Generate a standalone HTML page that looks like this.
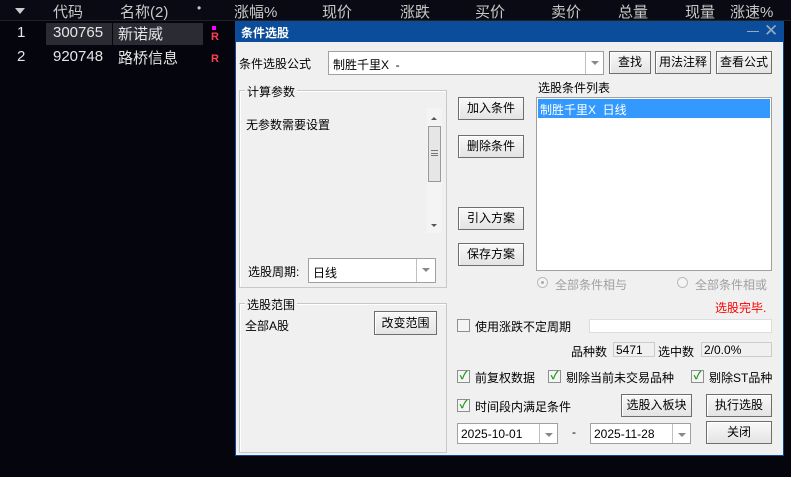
<!DOCTYPE html><html><head><meta charset="utf-8"><style>
*{margin:0;padding:0;box-sizing:border-box}
body{width:791px;height:477px;background:#05050d;font-family:"Liberation Sans","Noto Sans CJK SC",sans-serif;position:relative;overflow:hidden;color:#000}
.a{position:absolute;white-space:nowrap}
.h{color:#c8c8c8;font-size:15px;top:1px}
.w{color:#e6e6e6;font-size:15px}
.d{font-size:12px}
.btn{position:absolute;background:linear-gradient(#f8f8f8,#e4e4e4);border:1px solid #6e6e6e;box-shadow:inset 1px 1px #fff;font-size:12px;text-align:center}
.inp{position:absolute;background:#fff;border:1px solid #a0a0a0}
.grp{position:absolute;border:1px solid #c8c8c8;box-shadow:inset 1px 1px #fff}
.cb{position:absolute;width:13px;height:13px;border:1px solid #8e8f8f;background:#f4f4f4;font-size:11px;color:#1a9a1a;line-height:11px;text-align:center;font-weight:bold}
.dd{position:absolute;right:0;top:0;bottom:0;width:18px;border-left:1px solid #c0c0c0}
.dd:after{content:"";position:absolute;left:5px;top:9px;border:4px solid transparent;border-top:4px solid #888}
</style></head><body>
<div class="a" style="left:0;top:0;width:791px;height:21px;background:#0a0a14;border-bottom:1px solid #222"></div>
<div class="a" style="left:15px;top:8px;border:5px solid transparent;border-top:6px solid #ccc"></div>
<div class="a h" style="left:53px">代码</div>
<div class="a h" style="left:120px">名称(2)</div>
<div class="a h" style="left:197px;font-size:12px">•</div>
<div class="a h" style="left:234px">涨幅%</div>
<div class="a h" style="left:322px">现价</div>
<div class="a h" style="left:400px">涨跌</div>
<div class="a h" style="left:475px">买价</div>
<div class="a h" style="left:551px">卖价</div>
<div class="a h" style="left:618px">总量</div>
<div class="a h" style="left:685px">现量</div>
<div class="a h" style="left:730px">涨速%</div>
<div class="a" style="left:46px;top:23px;width:66px;height:22px;background:#2a2b33"></div>
<div class="a" style="left:113px;top:23px;width:90px;height:22px;background:#2a2b33"></div>
<div class="a w" style="left:17px;top:24px">1</div>
<div class="a w" style="left:53px;top:24px">300765</div>
<div class="a w" style="left:118px;top:23px">新诺威</div>
<div class="a" style="left:212px;top:26px;width:4px;height:4px;background:#f0f"></div>
<div class="a" style="left:211px;top:31px;color:#ff4050;font-size:11px;font-weight:bold">R</div>
<div class="a w" style="left:17px;top:48px">2</div>
<div class="a w" style="left:53px;top:48px">920748</div>
<div class="a w" style="left:118px;top:47px">路桥信息</div>
<div class="a" style="left:211px;top:53px;color:#ff4050;font-size:11px;font-weight:bold">R</div>

<div class="a" style="left:235px;top:21px;width:549px;height:435px;background:#f0f0f0;border:1px solid #0a4a94"></div>
<div class="a" style="left:235px;top:21px;width:549px;height:21px;background:#0b4d9a"></div>
<div class="a" style="left:241px;top:24px;color:#fff;font-size:12px;font-weight:bold">条件选股</div>
<div class="a" style="left:747px;top:31px;width:12px;height:1px;background:#9ab"></div>
<div class="a" style="left:764px;top:21px;color:#9ab;font-size:17px">✕</div>

<div class="a d" style="left:239px;top:55px">条件选股公式</div>
<div class="inp" style="left:328px;top:51px;width:276px;height:24px"><span class="a d" style="left:4px;top:4px">制胜千里X &nbsp;-</span><div class="dd"></div></div>
<div class="btn" style="left:609px;top:51px;width:42px;height:23px;line-height:21px">查找</div>
<div class="btn" style="left:655px;top:51px;width:56px;height:23px;line-height:21px">用法注释</div>
<div class="btn" style="left:716px;top:51px;width:56px;height:23px;line-height:21px">查看公式</div>

<div class="grp" style="left:239px;top:90px;width:208px;height:198px"></div>
<div class="a d" style="left:245px;top:83px;background:#f0f0f0;padding:0 2px">计算参数</div>
<div class="a d" style="left:246px;top:116px">无参数需要设置</div>
<div class="a" style="left:427px;top:108px;width:15px;height:125px;background:#f4f4f4"></div>
<div class="a" style="left:428px;top:126px;width:13px;height:56px;background:#e6e6e6;border:1px solid #999"></div>
<div class="a" style="left:431px;top:150px;width:7px;height:6px;border-top:1px solid #777;border-bottom:1px solid #777"></div>
<div class="a" style="left:431px;top:153px;width:7px;height:1px;background:#777"></div>
<div class="a" style="left:431px;top:114px;border:3px solid transparent;border-bottom:3px solid #555"></div>
<div class="a" style="left:431px;top:224px;border:3px solid transparent;border-top:3px solid #555"></div>
<div class="a d" style="left:248px;top:263px">选股周期:</div>
<div class="inp" style="left:308px;top:258px;width:128px;height:25px"><span class="a d" style="left:4px;top:5px">日线</span><div class="dd" style="width:19px"></div></div>

<div class="grp" style="left:239px;top:303px;width:208px;height:150px"></div>
<div class="a d" style="left:245px;top:296px;background:#f0f0f0;padding:0 2px">选股范围</div>
<div class="a d" style="left:245px;top:317px">全部A股</div>
<div class="btn" style="left:374px;top:311px;width:63px;height:24px;line-height:22px">改变范围</div>

<div class="btn" style="left:458px;top:97px;width:66px;height:23px;line-height:21px">加入条件</div>
<div class="btn" style="left:458px;top:135px;width:66px;height:23px;line-height:21px">删除条件</div>
<div class="btn" style="left:458px;top:207px;width:66px;height:23px;line-height:21px">引入方案</div>
<div class="btn" style="left:458px;top:243px;width:66px;height:23px;line-height:21px">保存方案</div>

<div class="a d" style="left:538px;top:79px">选股条件列表</div>
<div class="inp" style="left:536px;top:97px;width:236px;height:174px"></div>
<div class="a" style="left:538px;top:99px;width:232px;height:19px;background:#3399ff"></div>
<div class="a d" style="left:540px;top:101px;color:#fff">制胜千里X &nbsp;日线</div>
<div class="a" style="left:537px;top:277px;width:11px;height:11px;border-radius:50%;border:1px solid #bbb;background:#f4f4f4"></div>
<div class="a" style="left:541px;top:281px;width:3px;height:3px;border-radius:50%;background:#aaa"></div>
<div class="a d" style="left:555px;top:276px;color:#a0a0a0">全部条件相与</div>
<div class="a" style="left:677px;top:277px;width:11px;height:11px;border-radius:50%;border:1px solid #bbb;background:#f4f4f4"></div>
<div class="a d" style="left:695px;top:276px;color:#a0a0a0">全部条件相或</div>
<div class="a d" style="left:715px;top:299px;color:#f00">选股完毕.</div>

<div class="cb" style="left:457px;top:319px"></div>
<div class="a d" style="left:475px;top:318px">使用涨跌不定周期</div>
<div class="inp" style="left:589px;top:319px;width:183px;height:14px;border-color:#ddd"></div>
<div class="a d" style="left:571px;top:343px">品种数</div>
<div class="a d" style="left:613px;top:342px;width:42px;height:15px;border:1px solid #ccc;padding-left:2px">5471</div>
<div class="a d" style="left:658px;top:343px">选中数</div>
<div class="a d" style="left:701px;top:342px;width:71px;height:15px;border:1px solid #ccc;padding-left:2px">2/0.0%</div>

<div class="cb" style="left:457px;top:370px">✓</div>
<div class="a d" style="left:475px;top:369px">前复权数据</div>
<div class="cb" style="left:548px;top:370px">✓</div>
<div class="a d" style="left:566px;top:369px">剔除当前未交易品种</div>
<div class="cb" style="left:691px;top:370px">✓</div>
<div class="a d" style="left:709px;top:369px">剔除ST品种</div>
<div class="cb" style="left:457px;top:399px">✓</div>
<div class="a d" style="left:475px;top:398px">时间段内满足条件</div>
<div class="btn" style="left:621px;top:394px;width:71px;height:23px;line-height:21px">选股入板块</div>
<div class="btn" style="left:706px;top:394px;width:66px;height:23px;line-height:21px">执行选股</div>
<div class="inp" style="left:457px;top:423px;width:101px;height:21px"><span class="a d" style="left:3px;top:3px">2025-10-01</span><div class="dd" style="width:18px"></div></div>
<div class="a d" style="left:572px;top:425px">-</div>
<div class="inp" style="left:590px;top:423px;width:101px;height:21px"><span class="a d" style="left:3px;top:3px">2025-11-28</span><div class="dd" style="width:18px"></div></div>
<div class="btn" style="left:706px;top:421px;width:66px;height:23px;line-height:21px">关闭</div>
</body></html>
